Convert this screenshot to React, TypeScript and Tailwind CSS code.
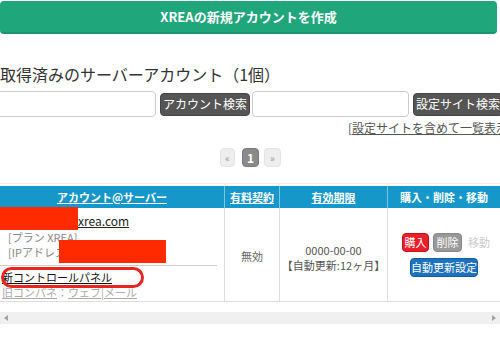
import React from "react";

const font = { fontFamily: '"Noto Sans CJK JP", "Liberation Sans", sans-serif' };

const Pager: React.FC = () => (
  <div className="flex justify-center items-center mt-[13px] pl-[1px]">
    <div className="w-[15px] h-[19px] bg-[#eee] border border-[#e4e4e4] text-[#999] text-[10px] flex items-center justify-center rounded-sm">«</div>
    <div className="ml-[7px] w-[17px] h-[19px] bg-[#8a8a8a] border border-[#7a7a7a] text-white text-[12px] font-bold flex items-center justify-center rounded-sm">1</div>
    <div className="ml-[5px] w-[17px] h-[19px] bg-[#eee] border border-[#e4e4e4] text-[#999] text-[10px] flex items-center justify-center rounded-sm">»</div>
  </div>
);

export default function App() {
  return (
    <div className="w-[500px] h-[338px] overflow-hidden bg-white text-[#333]" style={font}>
      <div className="pt-[1px] pr-[3px]">
        <div className="h-[33px] bg-[#1fa67b] border-b-2 border-[#1a9470] rounded-sm flex items-center justify-center text-white font-bold text-[13px]">
          XREAの新規アカウントを作成
        </div>
      </div>

      <h2 className="mt-[30px] text-[16px] leading-[20px] text-[#333] whitespace-nowrap">
        取得済みのサーバーアカウント（1個）
      </h2>

      <div className="mt-[7px] flex items-center whitespace-nowrap">
        <input className="-ml-[4px] w-[160px] h-[26px] border border-[#ccc] rounded-sm shrink-0" />
        <button className="ml-[4px] h-[23px] px-[2px] bg-[#555] text-white text-[12px] rounded-sm border border-[#444] shrink-0">
          アカウント検索
        </button>
        <input className="ml-[2px] w-[157px] h-[26px] border border-[#ccc] rounded-sm shrink-0" />
        <button className="ml-[4px] h-[23px] px-[2px] bg-[#555] text-white text-[12px] rounded-sm border border-[#444] shrink-0">
          設定サイト検索
        </button>
      </div>

      <div className="mt-[4px] pl-[348px] text-[12px] leading-[14px] text-[#555] whitespace-nowrap">
        [<span className="underline">設定サイトを含めて一覧表示</span>]
      </div>

      <Pager />

      <div className="mt-[16px] border-t border-[#eee]" />

      <div className="mt-[2px] grid grid-cols-[225px_55px_108px_112px] text-[11px]">
        <div className="h-[22px] bg-[#1597c9] text-white font-bold underline flex items-center justify-center border-r border-[#7cc6e3]">
          アカウント@サーバー
        </div>
        <div className="h-[22px] bg-[#1597c9] text-white font-bold underline flex items-center justify-center border-r border-[#7cc6e3]">
          有料契約
        </div>
        <div className="h-[22px] bg-[#1597c9] text-white font-bold underline flex items-center justify-center border-r border-[#7cc6e3]">
          有効期限
        </div>
        <div className="h-[22px] bg-[#1597c9] text-white font-bold flex items-center justify-center">
          購入・削除・移動
        </div>

        <div className="relative h-[94px] border-r border-b border-[#ddd] flex flex-col">
          <div className="absolute left-0 -top-[1px] w-[78px] h-[23px] bg-[#ff2a00]" />
          <div className="mt-[5px] h-[15px] leading-[15px] pl-[78px] text-[12px] text-[#222] underline whitespace-nowrap">
            xrea.com
          </div>
          <div className="mt-[2px] h-[15px] leading-[15px] pl-[8px] text-[#888] whitespace-nowrap">
            [プラン XREA]
          </div>
          <div className="h-[15px] leading-[15px] pl-[8px] text-[#888] whitespace-nowrap">
            [IPアドレス
          </div>
          <div className="absolute left-[59px] top-[32px] w-[107px] h-[23px] bg-[#ff2a00]" />
          <div className="mt-[5px] w-[217px] border-t border-[#ccc]" />
          <div className="relative mt-[4px] h-[15px] leading-[15px] pl-[2px] text-[#111] whitespace-nowrap">
            <span className="underline">新コントロールパネル</span>
            <div className="absolute left-[1px] -top-[3px] w-[143px] h-[21px] rounded-full border-[3px] border-[#e8261e]" />
          </div>
          <div className="h-[15px] leading-[15px] pl-[2px] text-[#aaa] whitespace-nowrap">
            <span className="underline">旧コンパネ</span>：<span className="underline">ウェブ</span>|<span className="underline">メール</span>
          </div>
        </div>

        <div className="h-[94px] border-r border-b border-[#ddd] flex items-center justify-center pt-[4px] text-[#666]">
          無効
        </div>

        <div className="h-[94px] border-r border-b border-[#ddd] flex flex-col items-center justify-center pt-[6px] leading-[15px] text-[#555]">
          <div>0000-00-00</div>
          <div className="whitespace-nowrap">【自動更新:12ヶ月】</div>
        </div>

        <div className="h-[94px] border-b border-[#ddd] flex flex-col items-center pt-[25px]">
          <div className="flex items-center gap-[4px] pl-[4px]">
            <div className="w-[27px] h-[19px] bg-[#e8202a] border border-[#c8101a] text-white flex items-center justify-center rounded-sm">購入</div>
            <div className="w-[29px] h-[19px] bg-[#999] border border-[#888] text-white flex items-center justify-center rounded-sm">削除</div>
            <div className="ml-[2px] text-[#ccc]">移動</div>
          </div>
          <div className="mt-[6px] w-[68px] h-[19px] bg-[#1d72bd] border border-[#155c9c] text-white flex items-center justify-center rounded-sm">
            自動更新設定
          </div>
        </div>
      </div>

      <div className="mt-[10px] h-[12px] bg-[#f0f0f0] flex items-center justify-between px-[4px]">
        <svg width="4" height="6" viewBox="0 0 4 6"><path d="M4 0 L0 3 L4 6 Z" fill="#a3a3a3" /></svg>
        <svg width="4" height="6" viewBox="0 0 4 6"><path d="M0 0 L4 3 L0 6 Z" fill="#a3a3a3" /></svg>
      </div>
    </div>
  );
}
